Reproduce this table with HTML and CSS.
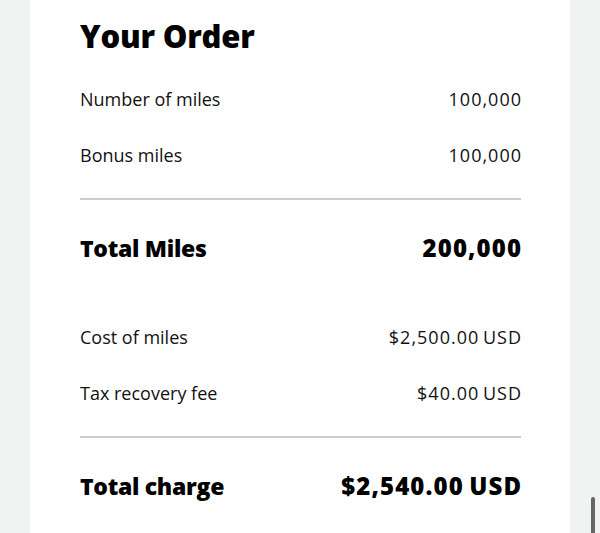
FILE: index.html
```html
<!DOCTYPE html>
<html>
<head>
<meta charset="utf-8">
<link rel="stylesheet" href="styles.css">
</head>
<body>
<div class="page">
  <div class="card">
    <h1 class="title">Your Order</h1>
    <div class="group">
      <div class="row"><span>Number of miles</span><span class="val">100,000</span></div>
      <div class="row"><span>Bonus miles</span><span class="val">100,000</span></div>
    </div>
    <div class="divider"></div>
    <div class="row total"><span>Total Miles</span><span class="val">200,000</span></div>
    <div class="group group2">
      <div class="row"><span>Cost of miles</span><span class="val">$2,500.00 USD</span></div>
      <div class="row"><span>Tax recovery fee</span><span class="val">$40.00 USD</span></div>
    </div>
    <div class="divider"></div>
    <div class="row total"><span>Total charge</span><span class="val">$2,540.00 USD</span></div>
  </div>
  <div class="scrollbar"></div>
</div>
</body>
</html>
```
FILE: styles.css
```css
html, body {
  margin: 0;
  padding: 0;
}
body {
  background: #f1f2f2;
  font-family: "Open Sans", "Noto Sans", sans-serif;
  color: #111;
}
.page {
  position: relative;
  width: 600px;
  height: 533px;
  overflow: hidden;
}
.card {
  margin-left: 30px;
  width: 540px;
  height: 533px;
  background: #fff;
  padding: 0 49px 0 50px;
  box-sizing: border-box;
}
.title {
  margin: 0;
  padding-top: 16px;
  font-size: 31px;
  font-weight: 800;
  line-height: 40px;
  letter-spacing: -0.2px;
  color: #000;
}
.group {
  padding-top: 30px;
  display: flex;
  flex-direction: column;
  gap: 30px;
}
.row {
  display: flex;
  justify-content: space-between;
  align-items: baseline;
  font-size: 18px;
  line-height: 26px;
}
.val {
  letter-spacing: 1px;
  word-spacing: -2px;
  margin-right: -1px;
}
.divider {
  height: 2px;
  background: #c8cfd2;
  margin-top: 30px;
}
.total {
  font-size: 23px;
  font-weight: 800;
  color: #000;
  margin-top: 33px;
  line-height: 30px;
  letter-spacing: -0.3px;
}
.total .val {
  font-size: 24px;
  letter-spacing: 1.1px;
  word-spacing: -2px;
  margin-right: -1.1px;
}
.group2 {
  padding-top: 61px;
}
.scrollbar {
  position: absolute;
  left: 591px;
  top: 497px;
  width: 4px;
  height: 40px;
  border-radius: 2px;
  background: #666;
}
```
